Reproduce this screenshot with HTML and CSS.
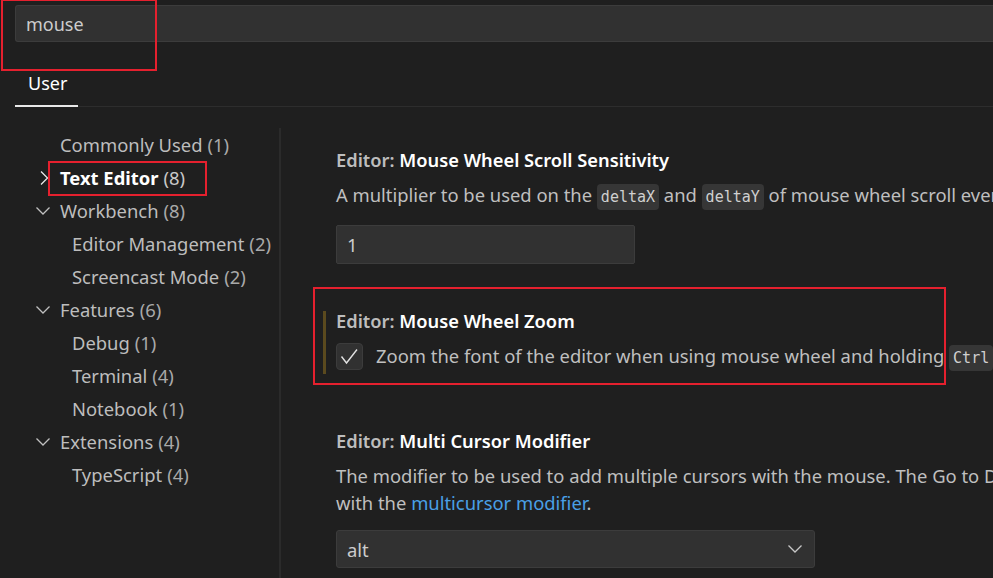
FILE: index.html
```html
<!DOCTYPE html>
<html>
<head>
<meta charset="utf-8">
<link rel="stylesheet" href="styles.css">
</head>
<body>
<div class="page">
  <div class="search-wrap">
    <div class="search">mouse</div>
  </div>
  <div class="tabs">
    <div class="tab">User</div>
  </div>
  <div class="main">
    <nav class="toc">
      <div class="row l1"><span class="chev"></span><span class="lbl">Commonly Used</span><span class="cnt">(1)</span></div>
      <div class="row l1 sel"><span class="chev"><svg width="10" height="16" viewBox="0 0 10 16"><path d="M2 1.5 L8.5 8 L2 14.5" fill="none" stroke="#e8e8e8" stroke-width="1.3"/></svg></span><span class="lbl">Text Editor</span><span class="cnt">(8)</span></div>
      <div class="row l1"><span class="chev"><svg width="16" height="10" viewBox="0 0 16 10"><path d="M1.5 1.5 L8 8 L14.5 1.5" fill="none" stroke="#c0c0c0" stroke-width="1.3"/></svg></span><span class="lbl">Workbench</span><span class="cnt">(8)</span></div>
      <div class="row l2"><span class="lbl">Editor Management</span><span class="cnt">(2)</span></div>
      <div class="row l2"><span class="lbl">Screencast Mode</span><span class="cnt">(2)</span></div>
      <div class="row l1"><span class="chev"><svg width="16" height="10" viewBox="0 0 16 10"><path d="M1.5 1.5 L8 8 L14.5 1.5" fill="none" stroke="#c0c0c0" stroke-width="1.3"/></svg></span><span class="lbl">Features</span><span class="cnt">(6)</span></div>
      <div class="row l2"><span class="lbl">Debug</span><span class="cnt">(1)</span></div>
      <div class="row l2"><span class="lbl">Terminal</span><span class="cnt">(4)</span></div>
      <div class="row l2"><span class="lbl">Notebook</span><span class="cnt">(1)</span></div>
      <div class="row l1"><span class="chev"><svg width="16" height="10" viewBox="0 0 16 10"><path d="M1.5 1.5 L8 8 L14.5 1.5" fill="none" stroke="#c0c0c0" stroke-width="1.3"/></svg></span><span class="lbl">Extensions</span><span class="cnt">(4)</span></div>
      <div class="row l2"><span class="lbl">TypeScript</span><span class="cnt">(4)</span></div>
    </nav>
    <section class="settings">
      <div class="setting s1">
        <div class="title"><span class="cat">Editor: </span><span class="name">Mouse Wheel Scroll Sensitivity</span></div>
        <div class="desc">A multiplier to be used on the <code>deltaX</code> and <code>deltaY</code> of mouse wheel scroll events.</div>
        <div class="input">1</div>
      </div>
      <div class="setting s2 modified">
        <div class="title"><span class="cat">Editor: </span><span class="name">Mouse Wheel Zoom</span></div>
        <div class="bool">
          <span class="check"><svg width="27" height="27" viewBox="0 0 27 27"><path d="M5.5 13.5 L10.5 20 L21 6.5" fill="none" stroke="#e0e0e0" stroke-width="1.4"/></svg></span>
          <span class="desc">Zoom the font of the editor when using mouse wheel and holding <code>Ctrl</code>.</span>
        </div>
      </div>
      <div class="setting s3">
        <div class="title"><span class="cat">Editor: </span><span class="name">Multi Cursor Modifier</span></div>
        <div class="desc">The modifier to be used to add multiple cursors with the mouse. The Go to Definition and Open Link mouse gestures will adapt such that they do not conflict<br>with the <a class="link">multicursor modifier</a>.</div>
        <div class="select"><span>alt</span><svg width="16" height="10" viewBox="0 0 16 10"><path d="M1.5 1.5 L8 8 L14.5 1.5" fill="none" stroke="#c8c8c8" stroke-width="1.3"/></svg></div>
      </div>
    </section>
  </div>
  <div class="mark m-search"></div>
  <div class="mark m-toc"></div>
  <div class="mark m-setting"></div>
</div>
</body>
</html>
```

FILE: styles.css
```css
* { box-sizing: border-box; }
html, body {
  margin: 0;
  padding: 0;
  background: #1f1f1f;
  overflow: hidden;
}
body {
  font-family: "Noto Sans", "Open Sans", sans-serif;
  font-size: 18.4px;
  color: #cccccc;
  width: 993px;
  height: 578px;
}
.page {
  position: relative;
  width: 993px;
  height: 578px;
  overflow: hidden;
}
.search-wrap {
  padding: 5px 0 0 15px;
}
.search {
  height: 37px;
  background: #313131;
  border: 1px solid #3c3c3c;
  border-right: none;
  border-radius: 3px 0 0 3px;
  padding: 2px 0 0 10px;
  line-height: 33px;
  font-size: 18px;
  color: #cccccc;
}
.tabs {
  margin: 0 0 0 15px;
  height: 65px;
  border-bottom: 1px solid #2d2d2d;
  display: flex;
  align-items: flex-end;
}
.tab {
  width: 63px;
  padding: 0 0 0 13px;
  height: 47px;
  line-height: 46px;
  font-size: 18px;
  color: #ffffff;
  border-bottom: 2px solid #e8e8e8;
  margin-bottom: -1px;
}
.main {
  display: flex;
  padding-top: 21px;
}
.toc {
  width: 281px;
  border-right: 2px solid #2b2b2b;
  flex: none;
  height: 460px;
}
.row {
  height: 33px;
  display: flex;
  align-items: center;
  white-space: nowrap;
  color: #bdbdbd;
}
.row.l1 { padding-left: 35px; }
.row.l2 { padding-left: 72px; }
.chev {
  width: 25px;
  height: 33px;
  display: flex;
  align-items: center;
  justify-content: flex-start;
}
.row.sel .chev { padding-left: 4px; }
.cnt {
  margin-left: 5px;
  color: #a9a9a9;
}
.row.sel .lbl {
  color: #ffffff;
  font-weight: 700;
}
.row.sel .cnt { color: #c8c8c8; }
.settings {
  flex: 1;
  padding-left: 55px;
  white-space: nowrap;
}
.setting { position: relative; }
.s1 { padding-top: 20px; }
.s2 { margin-top: 45px; }
.s3 { margin-top: 55px; }
.title {
  line-height: 24px;
  font-size: 18.3px;
  font-weight: 600;
  margin-bottom: 9px;
}
.cat { color: #bdbdbd; }
.name { color: #ffffff; }
.desc {
  line-height: 27px;
  color: #bfbfbf;
}
code {
  font-family: "DejaVu Sans Mono", "Liberation Mono", monospace;
  font-size: 15px;
  background: #363636;
  color: #d0d0d0;
  border-radius: 4px;
  padding: 4px 4px;
}
.input {
  margin-top: 14px;
  width: 299px;
  height: 39px;
  background: #313131;
  border: 1px solid #3c3c3c;
  border-radius: 2px;
  padding-left: 10px;
  line-height: 37px;
  color: #cccccc;
}
.modified::before {
  content: "";
  position: absolute;
  left: -13px;
  top: 2px;
  width: 3px;
  height: 63px;
  background: #5b4a1e;
}
.s2 .title { margin-bottom: 10px; }
.bool {
  display: flex;
  align-items: center;
  gap: 13px;
  height: 27px;
  padding-bottom: 4px;
  box-sizing: content-box;
}
.check {
  width: 27px;
  height: 27px;
  background: #313131;
  border: 1px solid #3c3c3c;
  border-radius: 4px;
  display: flex;
  flex: none;
  overflow: hidden;
}
.check svg { margin: -1px; }
.link { color: #4aa0e6; }
.select {
  margin-top: 14px;
  width: 479px;
  height: 38px;
  background: #313131;
  border: 1px solid #3c3c3c;
  border-radius: 3px;
  padding: 0 11px 0 10px;
  display: flex;
  align-items: center;
  justify-content: space-between;
  color: #cccccc;
}
.mark {
  position: absolute;
  border: 2px solid #e5202e;
}
.m-search { left: 1px; top: -1px; width: 156px; height: 72px; }
.m-toc { left: 48px; top: 161px; width: 159px; height: 35px; }
.m-setting { left: 313px; top: 287px; width: 633px; height: 98px; }
```
